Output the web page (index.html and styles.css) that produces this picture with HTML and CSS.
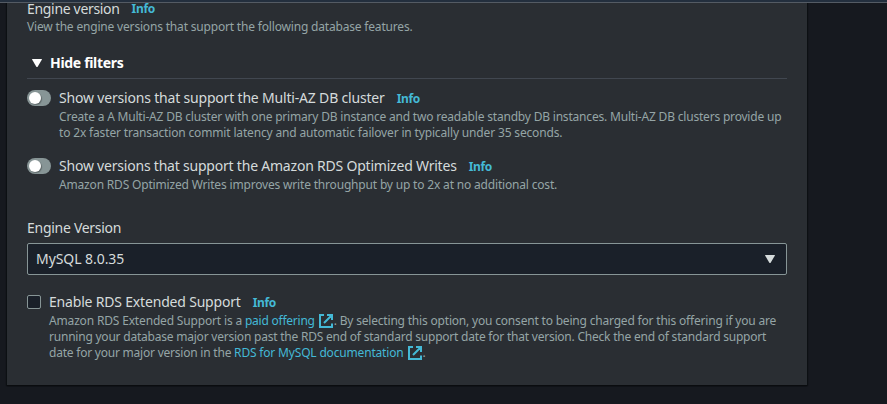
FILE: index.html
```
<!DOCTYPE html>
<html lang="en">
<head>
<meta charset="utf-8">
<title>Engine version</title>
<link rel="stylesheet" href="styles.css">
</head>
<body>
<div class="topbar"></div>
<main class="panel">
  <div class="title"><span class="t-engine">Engine version</span><a class="info">Info</a></div>
  <p class="desc"><span class="line d-view">View the engine versions that support the following database features.</span></p>

  <div class="expander">
    <svg class="caret" width="10" height="8" viewBox="0 0 10 8"><path d="M.5 0h9q.7 0 .3.7L5.8 7.4q-.8 1-1.6 0L.2.7Q-.2 0 .5 0z"/></svg>
    <span class="t-hide">Hide filters</span>
  </div>

  <section class="option multi-az">
    <span class="toggle"></span>
    <div>
      <div class="title"><span class="t-cluster">Show versions that support the Multi-AZ DB cluster</span><a class="info">Info</a></div>
      <p class="desc">
        <span class="line d-create">Create a A Multi-AZ DB cluster with one primary DB instance and two readable standby DB instances. Multi-AZ DB clusters provide up</span>
        <span class="line d-faster">to 2x faster transaction commit latency and automatic failover in typically under 35 seconds.</span>
      </p>
    </div>
  </section>

  <section class="option writes">
    <span class="toggle"></span>
    <div>
      <div class="title"><span class="t-writes">Show versions that support the Amazon RDS Optimized Writes</span><a class="info">Info</a></div>
      <p class="desc"><span class="line d-writes">Amazon RDS Optimized Writes improves write throughput by up to 2x at no additional cost.</span></p>
    </div>
  </section>

  <div class="title field-label"><span class="t-label">Engine Version</span></div>
  <div class="select">
    <span class="t-value">MySQL 8.0.35</span>
    <svg class="caret" width="10" height="8" viewBox="0 0 10 8"><path d="M.5 0h9q.7 0 .3.7L5.8 7.4q-.8 1-1.6 0L.2.7Q-.2 0 .5 0z"/></svg>
  </div>

  <section class="option extended">
    <span class="checkbox"></span>
    <div>
      <div class="title"><span class="t-enable">Enable RDS Extended Support</span><a class="info">Info</a></div>
      <p class="desc">
        <span class="line"><span class="d-support">Amazon RDS Extended Support is a </span><a class="link d-paid">paid offering</a><svg class="ext" width="14" height="14" viewBox="0 0 14 14"><path d="M5 1H1v12h12V9.5M8 1h5v5M12.5 1.5 5 9"/></svg><span class="d-consent">. By selecting this option, you consent to being charged for this offering if you are</span></span>
        <span class="line d-running">running your database major version past the RDS end of standard support date for that version. Check the end of standard support</span>
        <span class="line"><span class="d-date">date for your major version in the </span><a class="link d-docs">RDS for MySQL documentation</a><svg class="ext" width="14" height="14" viewBox="0 0 14 14"><path d="M5 1H1v12h12V9.5M8 1h5v5M12.5 1.5 5 9"/></svg><span>.</span></span>
      </p>
    </div>
  </section>
</main>
</body>
</html>
```
FILE: styles.css
```
* { box-sizing: border-box; }

body {
  margin: 0;
  height: 404px;
  overflow: hidden;
  background: #16191f;
  color: #d5dbdb;
  font: 14px/20px "Noto Sans", sans-serif;
}

.topbar {
  position: absolute;
  inset: 0 0 auto;
  height: 3px;
  background: #232f3e;
  border-bottom: 1px solid #545b64;
}

.panel {
  display: flow-root;
  width: 800px;
  height: 385px;
  margin-left: 7px;
  padding: 0 20px;
  background: #2a2e33;
  box-shadow: 0 1px 1px #0a0c0f, 1px 1px 1px #0e1115, -1px 1px 1px #0e1115;
}

.title {
  display: flex;
  height: 20px;
  gap: 12px;
  white-space: nowrap;
}

.panel > .title:first-child {
  height: 18px;
  line-height: 18px;
}

.info {
  color: #44b9d6;
  font-size: 12px;
  font-weight: 700;
  line-height: 21px;
  letter-spacing: -.35px;
}

.panel > .title:first-child .info { line-height: 18px; }

.desc {
  margin: 1px 0 0;
  color: #95a5a6;
  font-size: 12px;
  line-height: 16px;
}

.line {
  display: flex;
  height: 16px;
  white-space: pre;
}

.link { color: #44b9d6; }

.expander {
  display: flex;
  box-sizing: content-box;
  align-items: center;
  gap: 8px;
  height: 19px;
  margin-top: 18px;
  padding: 0 0 6px 5px;
  border-bottom: 1px solid #414750;
  color: #fff;
  font-weight: 700;
}

.caret { fill: currentColor; }

.option { display: flex; }
.multi-az { margin-top: 9px; }
.writes { margin-top: 15px; }
.extended { margin-top: 17px; }

.toggle {
  flex: none;
  width: 24px;
  height: 16px;
  margin: 2px 8px 0 0;
  padding: 2px;
  border-radius: 8px;
  background: #879596;
}

.toggle::before {
  content: "";
  display: block;
  width: 12px;
  height: 12px;
  border-radius: 50%;
  background: #fff;
  box-shadow: 1px 1px 1px rgba(0, 0, 0, .3);
}

.field-label { margin-top: 25px; }

.select {
  display: flex;
  align-items: center;
  justify-content: space-between;
  height: 32px;
  margin-top: 5px;
  padding: 0 11px 0 8px;
  border: 1px solid #879596;
  border-radius: 2px;
  background: #1a2029;
}

.checkbox {
  flex: none;
  width: 14px;
  height: 14px;
  margin: 3px 8px 0 0;
  border: 1px solid #879596;
  border-radius: 2px;
  background: #1a2029;
}

.ext {
  margin: 1px 1px 0 4px;
  fill: none;
  stroke: #44b9d6;
  stroke-width: 2;
}

.t-engine { letter-spacing: -.32px; }
.t-hide { letter-spacing: -.32px; }
.t-cluster { letter-spacing: -.185px; }
.t-writes { letter-spacing: -.21px; }
.t-label { letter-spacing: -.28px; }
.t-value { letter-spacing: -.06px; }
.t-enable { letter-spacing: -.185px; }
.d-view { letter-spacing: -.18px; }
.d-create { letter-spacing: -.192px; }
.d-faster { letter-spacing: -.16px; }
.d-writes { letter-spacing: -.178px; }
.d-support { letter-spacing: -.165px; }
.d-paid { letter-spacing: -.24px; }
.d-consent { letter-spacing: -.19px; }
.d-running { letter-spacing: -.219px; }
.d-date { letter-spacing: -.22px; }
.d-docs { letter-spacing: -.175px; }
```
